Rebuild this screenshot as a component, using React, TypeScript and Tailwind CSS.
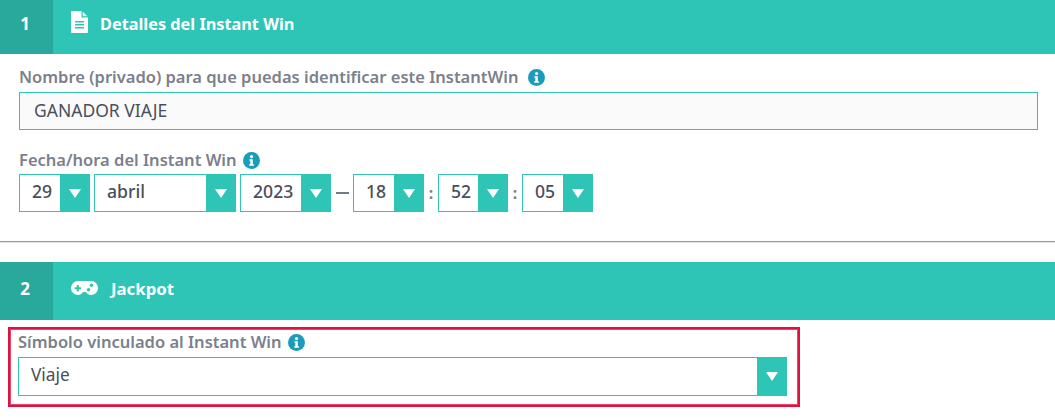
const font = { fontFamily: '"Noto Sans", sans-serif' };

function Caret() {
  return <span className="block h-0 w-0 border-x-[6px] border-t-[9px] border-x-transparent border-t-white" />;
}

function InfoDot() {
  return (
    <svg width="17" height="17" viewBox="0 0 17 17" className="shrink-0">
      <circle cx="8.5" cy="8.5" r="8.5" fill="#1a9dbb" />
      <circle cx="8.5" cy="4.6" r="1.6" fill="#fff" />
      <path d="M6.4 7.2h3.4v5h1.1v1.6H6.2v-1.6h1.1V8.8H6.4z" fill="#fff" />
    </svg>
  );
}

function DocIcon() {
  return (
    <svg width="17" height="22" viewBox="0 0 17 22">
      <path d="M1 0h9.5v6.5H17V21a1 1 0 0 1-1 1H1a1 1 0 0 1-1-1V1a1 1 0 0 1 1-1z" fill="#fff" />
      <path d="M11.7 0.4 16.6 5.3H11.7z" fill="#d8f5f1" />
      <path d="M4 10h9v1.4H4zM4 13h9v1.4H4zM4 16h9v1.4H4z" fill="#2ec5b6" />
    </svg>
  );
}

function PadIcon() {
  return (
    <svg width="27" height="14" viewBox="0 0 27 14">
      <path d="M7 0h13a7 7 0 0 1 0 14c-2.6 0-3.8-1.4-5-3h-3c-1.2 1.6-2.4 3-5 3A7 7 0 0 1 7 0z" fill="#fff" />
      <path d="M5.8 4h2v2.2H10v2H7.8v2.2h-2V8.200H3.600v-2h2.200z" fill="#2ec5b6" />
      <circle cx="20.500" cy="4.200" r="1.700" fill="#2ec5b6" />
      <circle cx="17.500" cy="8.800" r="1.700" fill="#2ec5b6" />
    </svg>
  );
}

function Select({ value, w }: { value: string; w: string }) {
  return (
    <div className={`flex h-[38px] border border-[#2ec5b6] bg-white ${w}`}>
      <span className="flex-1 self-center pb-[2px] pl-3 text-[17.6px] leading-none font-medium text-[#4a4f5c]">{value}</span>
      <span className="flex w-[29px] items-center justify-center bg-[#2ec5b6]">
        <Caret />
      </span>
    </div>
  );
}

export default function App() {
  return (
    <div className="h-[418px] w-[1055px] overflow-hidden bg-white" style={font}>
      <div className="flex h-[54px] bg-[#2ec5b6] text-white">
        <div className="flex w-[53px] items-center justify-center bg-[#29a99b] pr-[3px] pb-[6px] text-[17px] font-bold">1</div>
        <div className="ml-[18px] flex items-center gap-[12px] pb-[10px]">
          <DocIcon />
          <span className="mt-[4px] text-[16.3px] font-bold">Detalles del Instant Win</span>
        </div>
      </div>

      <div className="px-[19px]">
        <div className="mt-[12px] flex h-[22px] items-center gap-[10px] text-[16.500px] font-semibold text-[#7a808c]">
          Nombre (privado) para que puedas identificar este InstantWin
          <InfoDot />
        </div>
        <div className="mt-[4px] flex h-[38px] w-[1019px] items-center border border-[#2ec5b6] bg-[#fafafa] pb-[2px] pl-[14px] text-[17.500px] text-[#4a4f5c]">
          GANADOR VIAJE
        </div>

        <div className="mt-[19px] flex h-[22px] items-center gap-[6px] text-[16.500px] font-semibold text-[#7a808c]">
          Fecha/hora del Instant Win
          <InfoDot />
        </div>
        <div className="mt-[3px] flex items-center">
          <Select value="29" w="w-[71px]" />
          <div className="w-[4px]" />
          <Select value="abril" w="w-[142px]" />
          <div className="w-[4px]" />
          <Select value="2023" w="w-[91px]" />
          <span className="flex w-[22px] justify-center">
            <span className="h-[2px] w-[13px] bg-[#6f7c85]" />
          </span>
          <Select value="18" w="w-[71px]" />
          <span className="flex w-[14px] justify-center font-bold text-[#7a808c]">:</span>
          <Select value="52" w="w-[70px]" />
          <span className="flex w-[14px] justify-center font-bold text-[#7a808c]">:</span>
          <Select value="05" w="w-[71px]" />
        </div>
      </div>

      <div className="mt-[29px] h-[2px] border-t border-[#8f9a9a] bg-[#e5e5e5]" />

      <div className="mt-[19px] flex h-[58px] bg-[#2ec5b6] text-white">
        <div className="flex w-[53px] items-center justify-center bg-[#29a99b] pr-[3px] pb-[4px] text-[17px] font-bold">2</div>
        <div className="ml-[18px] flex items-center gap-[13px] pb-[7px]">
          <PadIcon />
          <span className="mt-[3px] text-[16.800px] font-bold">Jackpot</span>
        </div>
      </div>

      <div className="mt-[7px] ml-[8px] h-[80px] w-[792px] border-2 border-[#e0103f] pl-[8px] shadow-[inset_0_0_0_1px_#e8466c]">
        <div className="mt-px flex h-[24px] items-center gap-[6px] text-[16.500px] font-semibold text-[#7a808c]">
          Símbolo vinculado al Instant Win
          <InfoDot />
        </div>
        <div className="mt-[3px] flex h-[39px] w-[769px] border border-[#2ec5b6] bg-white">
          <span className="flex-1 self-center pb-[3px] pl-[12px] text-[17.300px] leading-none text-[#4a4f5c]">Viaje</span>
          <span className="flex w-[29px] items-center justify-center bg-[#2ec5b6]">
            <Caret />
          </span>
        </div>
      </div>
    </div>
  );
}
